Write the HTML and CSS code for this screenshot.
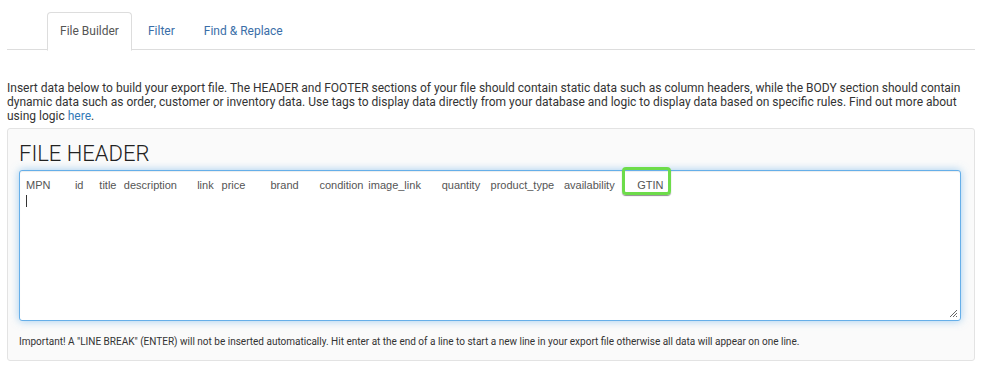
FILE: index.html
```html
<!DOCTYPE html>
<html lang="en">
<head>
    <meta charset="UTF-8">
    <meta name="viewport" content="width=device-width, initial-scale=1.0">
    <title>File Builder</title>
    <link rel="stylesheet" href="styles.css">
</head>
<body>
    <div class="page">
        <ul class="tabs">
            <li class="tab active">File Builder</li>
            <li class="tab"><a href="#">Filter</a></li>
            <li class="tab"><a href="#">Find &amp; Replace</a></li>
        </ul>

        <p class="intro">Insert data below to build your export file. The HEADER and FOOTER sections of your file should contain static data such as column headers, while the BODY section should contain dynamic data such as order, customer or inventory data. Use tags to display data directly from your database and logic to display data based on specific rules. Find out more about using logic <a href="#">here</a>.</p>

        <div class="well">
            <h2>FILE HEADER</h2>
            <div class="editor">
                <div class="editor-text">MPN&#9;id&#9;title&#9;description&#9;link&#9;price&#9;brand&#9;condition&#9;image_link&#9;quantity&#9;product_type&#9;availability&#9;<span class="mark">GTIN</span>
<span class="caret"></span></div>
                <svg class="grip" width="9" height="9" viewBox="0 0 9 9">
                    <path d="M1 8 L8 1 M4 8 L8 4 M7 8 L8 7" stroke="#666" stroke-width="1" fill="none"/>
                </svg>
            </div>
            <p class="note">Important! A "LINE BREAK" (ENTER) will not be inserted automatically. Hit enter at the end of a line to start a new line in your export file otherwise all data will appear on one line.</p>
        </div>
    </div>
</body>
</html>
```

FILE: styles.css
```css
body {
    margin: 0;
    background-color: #fff;
    font-family: Roboto, "Liberation Sans", sans-serif;
    color: #333;
}
a {
    color: #337ab7;
    text-decoration: none;
}
.page {
    padding: 12px 8px 0 7px;
}
.tabs {
    list-style: none;
    margin: 0;
    padding: 0 0 0 40px;
    display: flex;
    border-bottom: 1px solid #ddd;
    height: 37px;
}
.tab {
    font-size: 12px;
    padding: 0 12px;
    line-height: 36px;
    margin-right: 3px;
    border: 1px solid transparent;
    border-radius: 4px 4px 0 0;
}
.tab.active {
    color: #555;
    background-color: #fff;
    border-color: #ddd;
    border-bottom-color: #fff;
    height: 37px;
}
.tab a {
    color: #3a6ea8;
}
.intro {
    margin: 31px 0 0 0;
    font-size: 12px;
    line-height: 14px;
}
.well {
    margin-top: 5px;
    background-color: #fafafa;
    border: 1px solid #e3e3e3;
    border-radius: 3px;
    padding: 10px 13px 4px 11px;
    height: 217px;
}
h2 {
    margin: 0 0 1px 0;
    font-weight: 300;
    font-size: 22px;
    line-height: 30px;
    color: #222;
}
.editor {
    position: relative;
    height: 149px;
    background-color: #fff;
    border: 1px solid #66afe9;
    border-radius: 3px;
    box-shadow: inset 0 1px 1px rgba(0,0,0,.075), 0 0 8px rgba(102,175,233,.6);
}
.editor-text {
    padding: 6px 6px;
    font-family: "Liberation Sans", Arial, sans-serif;
    font-size: 11px;
    line-height: 16px;
    color: #555;
    white-space: pre;
    tab-size: 8;
}
.mark {
    position: relative;
}
.mark::after {
    content: "";
    position: absolute;
    left: -15px;
    top: -12px;
    width: 43px;
    height: 22px;
    border: 3px solid #6ddc4a;
    border-radius: 4px;
    box-shadow: 0 1px 1px rgba(0,0,0,.45);
}
.caret {
    display: inline-block;
    width: 1px;
    height: 12px;
    background-color: #333;
    vertical-align: -2px;
}
.grip {
    position: absolute;
    right: 2px;
    bottom: 2px;
}
.note {
    margin: 15px 0 0 0;
    font-size: 10px;
    line-height: 12px;
}
```
